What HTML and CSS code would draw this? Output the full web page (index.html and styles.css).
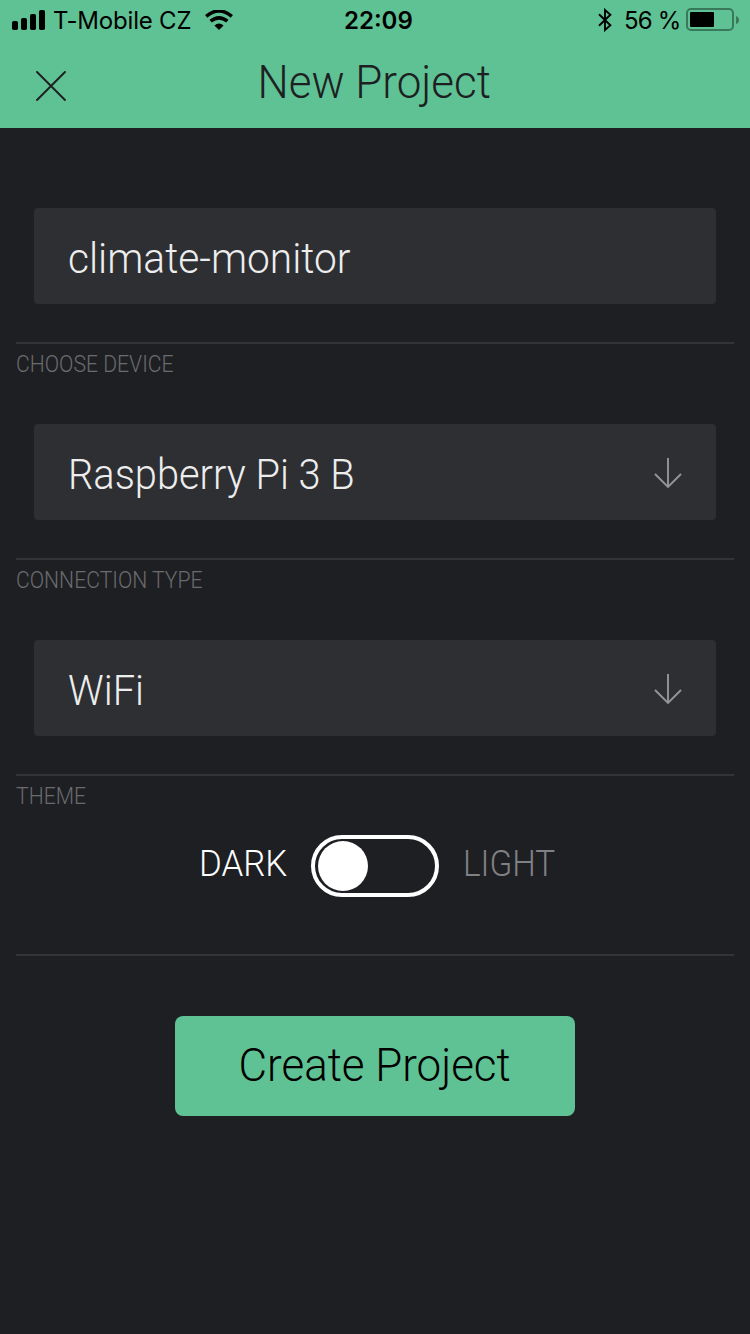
FILE: index.html
```html
<!DOCTYPE html>
<html lang="en">
<head>
<meta charset="utf-8">
<title>New Project</title>
<link rel="stylesheet" href="styles.css">
</head>
<body>
<header class="header">
  <div class="status">
    <div class="status-left">
      <svg class="signal" width="34" height="20" viewBox="0 0 34 20"><rect x="0" y="11" width="6" height="9" rx="1.8"/><rect x="9" y="8" width="6" height="12" rx="1.8"/><rect x="18" y="4" width="6" height="16" rx="1.8"/><rect x="27" y="0" width="6" height="20" rx="1.8"/></svg>
      <span class="carrier">T-Mobile CZ</span>
      <svg class="wifi" width="28" height="20" viewBox="0 0 28 20"><path d="M1.2 6.4Q14-4.4 26.8 6.4" fill="none" stroke="#000" stroke-width="3.6"/><path d="M5.6 11.2Q14 4.4 22.4 11.2" fill="none" stroke="#000" stroke-width="3.6"/><path d="M9.4 15.6Q14 11.6 18.6 15.6L14 20Z"/></svg>
    </div>
    <span class="time">22:09</span>
    <div class="status-right">
      <svg class="bluetooth" width="14" height="24" viewBox="0 0 14 24"><path d="M1 6.2L12.4 17.2L7 22V2L12.4 6.8L1 17.8" fill="none" stroke="#000" stroke-width="1.9"/></svg>
      <span class="percent">56 %</span>
      <svg class="battery" width="54" height="24" viewBox="0 0 54 24"><rect x="1" y="1" width="46" height="21" rx="4" fill="none" stroke="#39785a" stroke-width="2"/><rect x="4" y="4" width="24" height="15" rx="1"/><path d="M50 8Q53 9 53 12T50 16Z" fill="#39785a"/></svg>
    </div>
  </div>
  <div class="nav">
    <svg class="close" width="30" height="30" viewBox="0 0 30 30"><path d="M1 1L29 29M29 1L1 29" fill="none" stroke="#1e1f23" stroke-width="1.9" stroke-linecap="round"/></svg>
    <h1 class="title"><span class="fit t-title">New Project</span></h1>
  </div>
</header>
<main>
  <section class="section first">
    <div class="field"><span class="fit v-name">climate-monitor</span></div>
  </section>
  <section class="section">
    <h2 class="label"><span class="fit l-text">CHOOSE DEVICE</span></h2>
    <div class="field"><span class="fit v-select">Raspberry Pi 3 B</span>
      <svg class="arrow" width="28" height="32" viewBox="0 0 28 32"><path d="M14 1V30M1 17L14 30L27 17" fill="none" stroke="#949597" stroke-width="1.9"/></svg></div>
  </section>
  <section class="section">
    <h2 class="label"><span class="fit l-text">CONNECTION TYPE</span></h2>
    <div class="field"><span class="fit v-select">WiFi</span>
      <svg class="arrow" width="28" height="32" viewBox="0 0 28 32"><path d="M14 1V30M1 17L14 30L27 17" fill="none" stroke="#949597" stroke-width="1.9"/></svg></div>
  </section>
  <section class="section theme">
    <h2 class="label"><span class="fit l-text">THEME</span></h2>
    <div class="theme-row">
      <div class="option dark"><span class="fit t-dark">DARK</span></div>
      <div class="switch"><div class="knob"></div></div>
      <div class="option light"><span class="fit t-light">LIGHT</span></div>
    </div>
  </section>
  <section class="section actions">
    <button class="create"><span class="fit t-create">Create Project</span></button>
  </section>
</main>
</body>
</html>
```
FILE: styles.css
```css
* { box-sizing: border-box; }
body {
  margin: 0;
  height: 1334px;
  background: #1e1f23;
  font-family: Roboto, "Liberation Sans", sans-serif;
  font-weight: 300;
}
svg { display: block; flex: none; }
span { white-space: nowrap; }

/* Condensed letterforms */
.fit { display: inline-block; transform-origin: 0 50%; }
.t-title { transform: scaleX(.955); transform-origin: 50% 50%; }
.t-create { transform: scaleX(.954); transform-origin: 50% 50%; }
.v-name { transform: scaleX(.946); }
.v-select { transform: scaleX(.926); }
.l-text { transform: scaleX(.882); }
.t-dark { transform: scaleX(.94); }
.t-light { transform: scaleX(.9); }

.header { height: 128px; background: #5fc294; }
.status {
  height: 40px;
  display: grid;
  grid-template-columns: 1fr auto 1fr;
  padding: 0 10px 0 12px;
  font: 400 24px/42px Inter, sans-serif;
  color: #000;
}
.status-left, .status-right { display: flex; align-items: center; height: 40px; }
.status-right { justify-content: flex-end; }
.carrier { margin-left: 7px; padding-top: 2px; width: 139px; letter-spacing: -.2px; }
.wifi { margin-left: 13px; }
.time { font-weight: 600; width: 69px; margin-left: 5px; }
.bluetooth { margin-right: 12px; }
.percent { width: 57px; padding-top: 2px; margin-right: 5px; letter-spacing: -.8px; }
.nav {
  height: 88px;
  display: grid;
  grid-template-columns: 66px 1fr 68px;
}
.close { margin: 31px 0 0 36px; }
.title {
  margin: 0;
  font-size: 46px;
  line-height: 84px;
  font-weight: 300;
  text-align: center;
  color: #1e1f23;
}
.section {
  margin: 0 16px;
  height: 216px;
  border-top: 2px solid #333438;
}
.first { height: 214px; border: 0; padding-top: 80px; }
.label {
  margin: 0;
  height: 80px;
  font-size: 24px;
  line-height: 40px;
  font-weight: 300;
  color: #6a6b6e;
}
.field {
  height: 96px;
  margin: 0 18px;
  padding: 0 34px;
  border-radius: 4px;
  background: #2e2f33;
  color: #ededed;
  font-size: 43px;
  line-height: 100px;
  display: flex;
  justify-content: space-between;
}
.arrow { margin-top: 33px; }
.theme { height: 180px; }
.theme .label { height: 59px; }
.theme-row { display: flex; padding-left: 183px; font-size: 37px; line-height: 57px; }
.dark { color: #fff; width: 112px; }
.light { color: #808184; margin-left: 24px; }
.switch { width: 128px; height: 62px; border: 4px solid #fff; border-radius: 31px; padding: 2px 3px; }
.knob { width: 50px; height: 50px; border-radius: 50%; background: #fff; }
.actions { padding-top: 60px; }
.create {
  display: block;
  width: 400px;
  height: 100px;
  margin: 0 auto;
  padding: 0 1px 2px 0;
  border: 0;
  border-radius: 8px;
  background: #5fc294;
  color: #000;
  font: 300 46px/98px Roboto, sans-serif;
}
```
